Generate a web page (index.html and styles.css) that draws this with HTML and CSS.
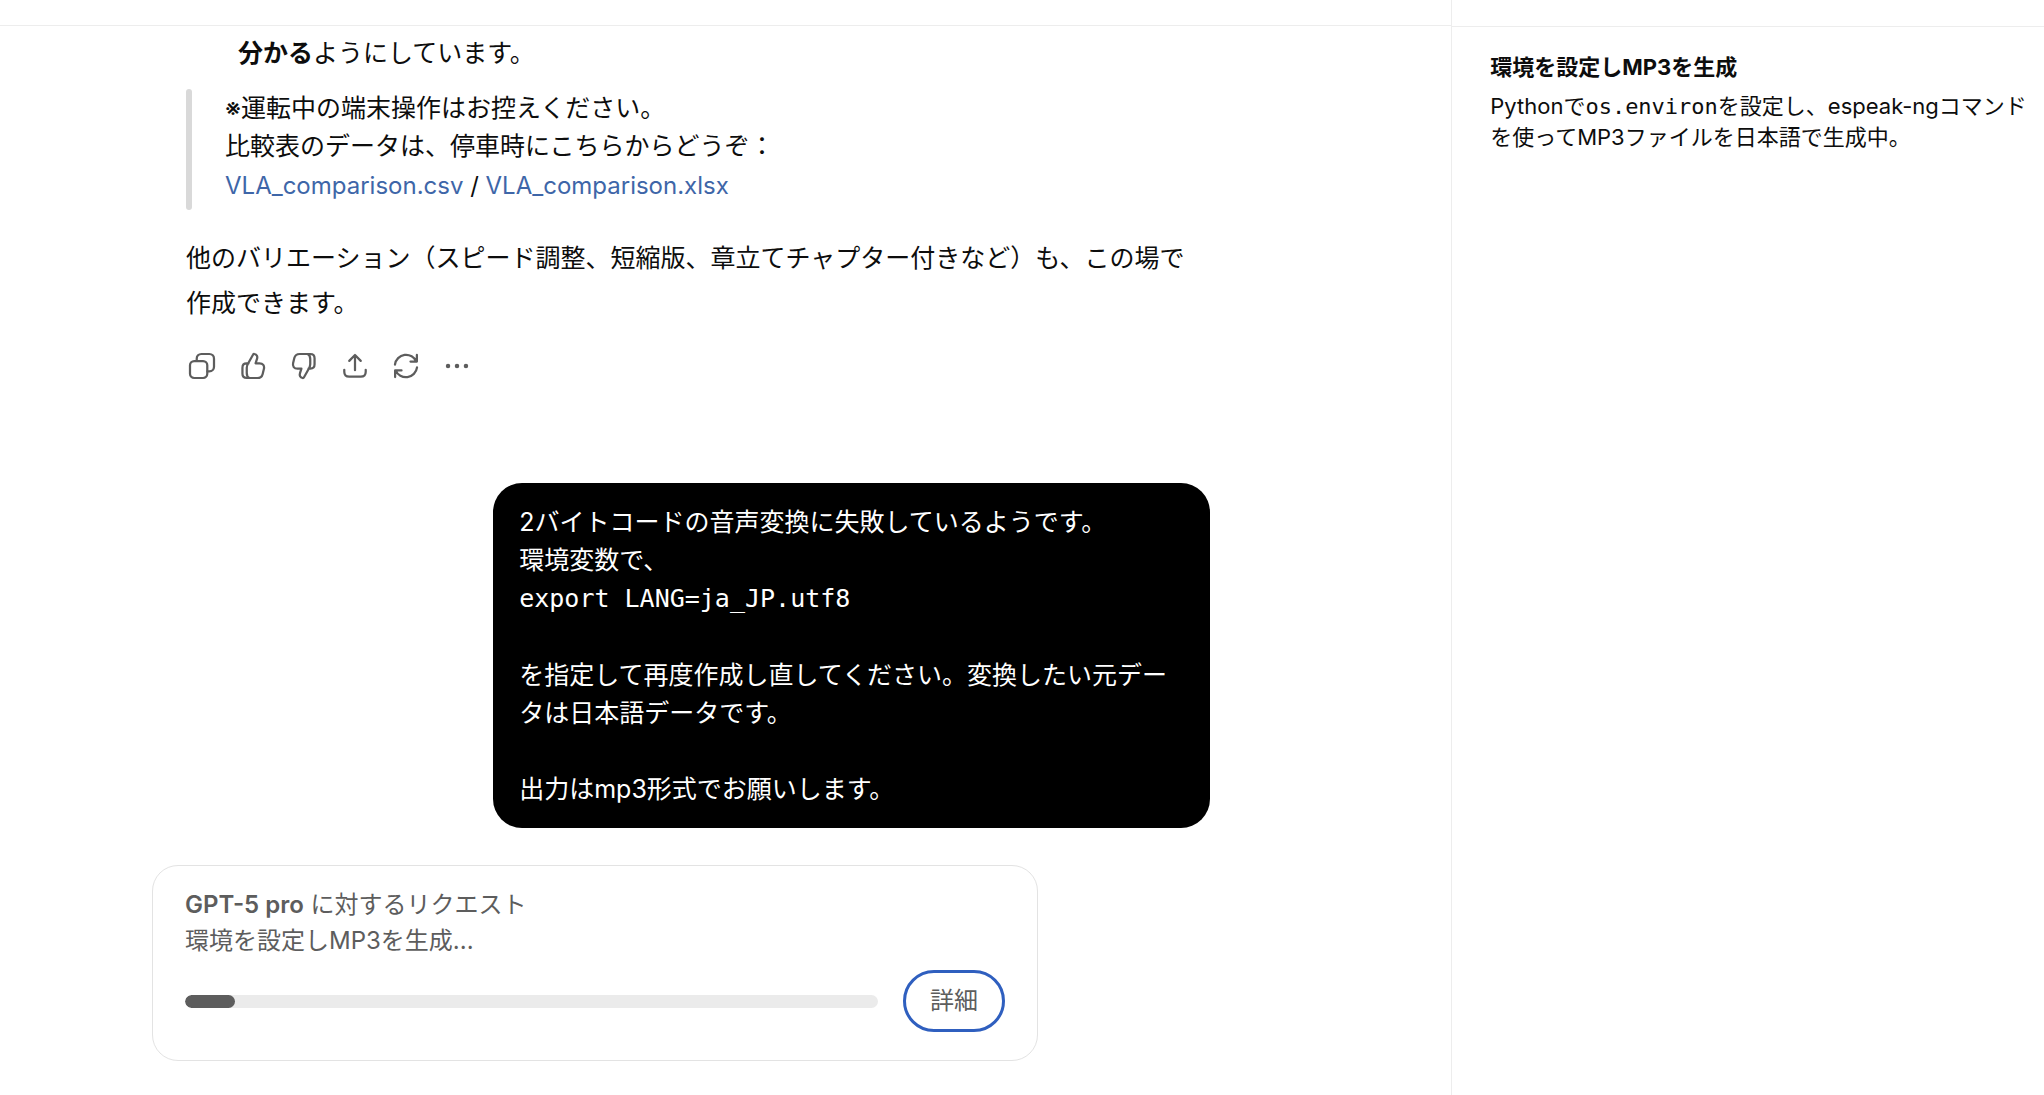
FILE: index.html
```html
<!DOCTYPE html>
<html lang="ja">
<head>
  <meta charset="UTF-8" />
  <meta name="viewport" content="width=device-width, initial-scale=1.0"/>
  <title>環境を設定しMP3を生成</title>
  <link rel="stylesheet" href="styles.css">
</head>
<body>

  <main class="chat">
    <header class="chat-header"></header>

    <div class="thread">
      <article class="answer">
        <p class="list-tail"><strong>分かる</strong>ようにしています。</p>

        <blockquote class="note">
          <p>※運転中の端末操作はお控えください。</p>
          <p>比較表のデータは、停車時にこちらからどうぞ：</p>
          <p class="files"><a href="#">VLA_comparison.csv</a> / <a href="#">VLA_comparison.xlsx</a></p>
        </blockquote>

        <p class="closing">他のバリエーション（スピード調整、短縮版、章立てチャプター付きなど）も、この場で作成できます。</p>

        <div class="actions">
          <button class="icon-btn" aria-label="コピーする">
            <svg viewBox="0 0 20 20"><rect x="2.5" y="6.9" width="10.8" height="10.6" rx="2.6"/><path d="M6.7 6.7V5.4c0-1.7 1.2-2.9 2.9-2.9h5c1.7 0 2.9 1.2 2.9 2.9v5c0 1.7-1.2 2.9-2.9 2.9h-1.2"/></svg>
          </button>
          <button class="icon-btn" aria-label="良い回答です">
            <svg viewBox="0 0 20 20"><path d="M7.8 17.5h4.9c1.7 0 2.9-.8 3.3-2.4l.8-3.2c.5-2-.6-3.6-2.7-3.6h-2.5l.9-2.7c.5-1.5-.1-2.8-1.6-3.1-.4-.1-.7.1-.9.5L7.1 8.1c-.6 1-1 1.8-1 3v3.2c0 1.9.6 2.8 1.7 3.2zM7.2 8.4H6c-1.6 0-2.6 1-2.6 2.7v3.8c0 1.7 1 2.6 2.7 2.6h1.8"/></svg>
          </button>
          <button class="icon-btn" aria-label="良くない回答です">
            <svg class="flipped" viewBox="0 0 20 20"><path d="M7.8 17.5h4.9c1.7 0 2.9-.8 3.3-2.4l.8-3.2c.5-2-.6-3.6-2.7-3.6h-2.5l.9-2.7c.5-1.5-.1-2.8-1.6-3.1-.4-.1-.7.1-.9.5L7.1 8.1c-.6 1-1 1.8-1 3v3.2c0 1.9.6 2.8 1.7 3.2zM7.2 8.4H6c-1.6 0-2.6 1-2.6 2.7v3.8c0 1.7 1 2.6 2.7 2.6h1.8"/></svg>
          </button>
          <button class="icon-btn" aria-label="共有する">
            <svg viewBox="0 0 20 20"><path d="M10 12.6V3.2M6.4 6.8 10 3.1l3.6 3.7M3.3 12.4v1.2c0 2 1 3.1 3.1 3.1h7.2c2.1 0 3.1-1.1 3.1-3.1v-1.2"/></svg>
          </button>
          <button class="icon-btn" aria-label="再生成する">
            <svg viewBox="0 0 20 20"><path d="M3.1 9.1a7 7 0 0 1 13.4-1.8M16.8 3.1v4.1h-4M16.9 10.9A7 7 0 0 1 3.5 12.7M3.2 16.9v-4.1h4"/></svg>
          </button>
          <button class="icon-btn" aria-label="その他">
            <svg class="filled" viewBox="0 0 20 20"><circle cx="4.4" cy="10" r="1.4"/><circle cx="10" cy="10" r="1.4"/><circle cx="15.6" cy="10" r="1.4"/></svg>
          </button>
        </div>
      </article>

      <div class="bubble">2バイトコードの音声変換に失敗しているようです。
環境変数で、
<code>export LANG=ja_JP.utf8</code>

を指定して再度作成し直してください。変換したい元データは日本語データです。

出力はmp3形式でお願いします。</div>
    </div>

    <section class="request-card">
      <p id="request-label"><b>GPT-5 pro</b> に対するリクエスト</p>
      <p>環境を設定しMP3を生成...</p>
      <div class="request-row">
        <progress value="72" max="1000" aria-labelledby="request-label"></progress>
        <button class="detail-btn">詳細</button>
      </div>
    </section>
  </main>

  <aside class="activity">
    <header class="activity-header"></header>
    <div class="activity-body">
      <h2>環境を設定しMP3を生成</h2>
      <p>Pythonで<code>os.environ</code>を設定し、espeak-ngコマンドを使ってMP3ファイルを日本語で生成中。</p>
    </div>
  </aside>

</body>
</html>
```
FILE: styles.css
```css
:root {
  --text: #0d0d0d;
  --muted: #5d5d5d;
  --line: #ededed;
  --link: #3e66a8;
  --focus: #2f5fbf;
}

* {
  margin: 0;
  padding: 0;
  box-sizing: border-box;
}

body {
  display: flex;
  min-height: 100vh;
  background-color: #fff;
  color: var(--text);
  font-family: Inter, "Noto Sans CJK JP", sans-serif;
  font-size: 25px;
  line-height: 38px;
}

button {
  font: inherit;
  color: var(--muted);
  background: none;
  border: none;
  cursor: pointer;
}

code {
  font-family: "DejaVu Sans Mono", monospace;
}

/* conversation */
.chat {
  flex: 1;
  min-width: 0;
}

.chat-header {
  height: 26px;
  border-bottom: 1px solid var(--line);
}

.thread {
  display: flex;
  flex-direction: column;
  max-width: 1210px;
  padding: 8px 0 0 186px;
}

.list-tail {
  padding-left: 52px;
}

.note {
  position: relative;
  margin: 17px 0 26px;
  padding: 0 0 3px 39px;
}

.note::before {
  content: "";
  position: absolute;
  top: 0;
  bottom: 0;
  left: 0;
  width: 6px;
  border-radius: 3px;
  background-color: #d9d9d9;
}

.files {
  font-size: 24px;
  line-height: 42px;
}

.files a {
  color: var(--link);
  text-decoration: none;
}

.closing {
  padding-right: 8px;
  line-height: 45px;
}

.actions {
  display: flex;
  margin: 14px 0 0 -10px;
}

.icon-btn {
  display: flex;
  align-items: center;
  justify-content: center;
  width: 51px;
  height: 51px;
}

.icon-btn svg {
  width: 32px;
  height: 32px;
  fill: none;
  stroke: currentColor;
  stroke-width: 1.4;
  stroke-linecap: round;
  stroke-linejoin: round;
}

.icon-btn .flipped {
  transform: rotate(180deg);
}

.icon-btn .filled {
  fill: currentColor;
  stroke: none;
}

.bubble {
  align-self: flex-end;
  max-width: 70%;
  margin-top: 92px;
  padding: 20px 26px;
  border-radius: 29px;
  background-color: #000;
  color: #fff;
  white-space: pre-wrap;
}

/* running request */
.request-card {
  max-width: 886px;
  margin: 37px 0 0 152px;
  padding: 21px 32px 28px;
  border: 1px solid #e3e3e3;
  border-radius: 26px;
  color: var(--muted);
  font-size: 24px;
  line-height: 36px;
}

.request-card b {
  font-weight: 600;
}

.request-row {
  display: flex;
  align-items: center;
  gap: 25px;
  margin-top: 11px;
}

progress {
  flex: 1;
  min-width: 0;
  height: 13px;
  appearance: none;
  border: none;
  border-radius: 7px;
  overflow: hidden;
}

progress::-webkit-progress-bar {
  background-color: #ebebeb;
}

progress::-webkit-progress-value {
  border-radius: 7px;
  background-color: var(--muted);
}

.detail-btn {
  height: 62px;
  padding: 0 24px;
  border: 3px solid var(--focus);
  border-radius: 31px;
}

/* activity panel */
.activity {
  flex: 0 0 29%;
  border-left: 1px solid var(--line);
  font-size: 22px;
  line-height: 31px;
}

.activity-header {
  height: 27px;
  border-bottom: 1px solid var(--line);
}

.activity-body {
  padding: 25px 10px 0 38px;
}

.activity-body h2 {
  margin-bottom: 8px;
  font-size: 22px;
  font-weight: 700;
}
```
